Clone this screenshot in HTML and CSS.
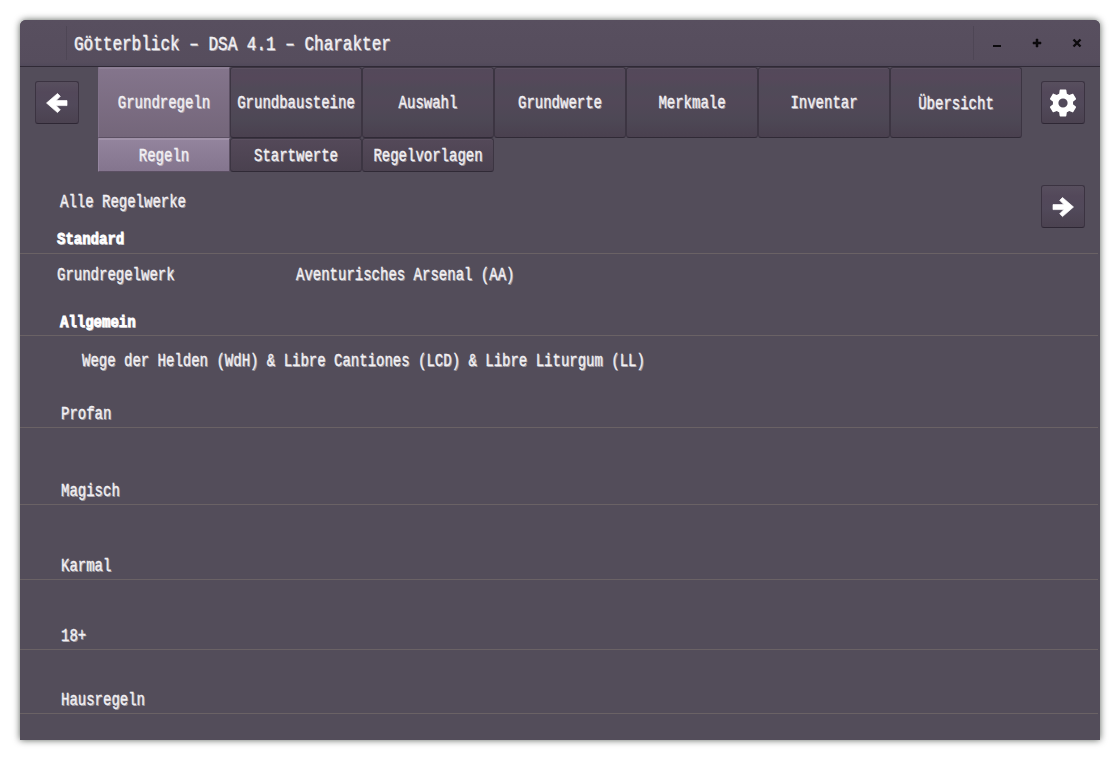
FILE: index.html
```html
<!DOCTYPE html>
<html lang="de">
<head>
<meta charset="utf-8">
<title>Götterblick – DSA 4.1 – Charakter</title>
<link rel="stylesheet" href="styles.css">
</head>
<body>
<div class="window">
  <header class="titlebar">
    <div class="app-slot"></div>
    <h1 class="title"><span class="t">Götterblick – DSA 4.1 – Charakter</span></h1>
    <div class="controls">
      <svg class="ctl" viewBox="0 0 40 46"><path d="M16 25h8v2h-8z"/></svg>
      <svg class="ctl" viewBox="0 0 40 46"><path d="M16 22h3v-3h2v3h3v2h-3v3h-2v-3h-3z" class="plus"/></svg>
      <svg class="ctl" viewBox="0 0 40 46"><path d="M16.500 19.500l7 7M23.500 19.500l-7 7" class="cross"/></svg>
    </div>
  </header>
  <div class="toolbar">
    <button class="icon-btn back"><svg viewBox="0 0 24 24"><path class="arrow" d="M12.5 2.5l2.8 2.8-4.2 4.3H22v5H11.100l4.200 4.200-2.800 2.800L1.500 12z"/></svg></button>
    <nav class="nav">
      <div class="tabs main">
        <div class="tab active"><span class="t">Grundregeln</span></div>
        <div class="tab"><span class="t">Grundbausteine</span></div>
        <div class="tab"><span class="t">Auswahl</span></div>
        <div class="tab"><span class="t">Grundwerte</span></div>
        <div class="tab"><span class="t">Merkmale</span></div>
        <div class="tab"><span class="t">Inventar</span></div>
        <div class="tab low"><span class="t">Übersicht</span></div>
      </div>
      <div class="tabs sub">
        <div class="tab active"><span class="t">Regeln</span></div>
        <div class="tab"><span class="t">Startwerte</span></div>
        <div class="tab"><span class="t">Regelvorlagen</span></div>
      </div>
    </nav>
    <div class="side">
      <button class="icon-btn"><svg class="gear" viewBox="2 2 20 20"><path d="M19.14 12.94c.04-.3.06-.61.06-.94 0-.32-.02-.64-.07-.94l2.030-1.580c.18-.14.23-.41.12-.61l-1.920-3.320c-.12-.22-.37-.29-.59-.22l-2.390.96c-.5-.38-1.030-.7-1.620-.94l-.36-2.540c-.04-.24-.24-.41-.48-.41h-3.840c-.24 0-.43.17-.47.41l-.36 2.540c-.59.24-1.130.57-1.620.94l-2.390-.96c-.22-.08-.47 0-.59.22L2.740 8.870c-.12.21-.08.47.12.61l2.030 1.580c-.05.3-.09.63-.09.94s.02.64.07.94l-2.030 1.580c-.18.14-.23.41-.12.61l1.920 3.320c.12.22.37.29.59.22l2.390-.96c.5.38 1.030.7 1.620.94l.36 2.540c.05.24.24.41.48.41h3.840c.24 0 .44-.17.47-.41l.36-2.540c.59-.24 1.130-.56 1.620-.94l2.390.96c.22.08.47 0 .59-.22l1.920-3.320c.12-.22.07-.47-.12-.61l-2.010-1.580zM12 15.300a3.300 3.300 0 1 1 0-6.600 3.300 3.300 0 0 1 0 6.600z"/></svg></button>
      <button class="icon-btn"><svg viewBox="0 0 24 24"><path class="arrow" d="M11.500 2.500L8.700 5.300l4.200 4.300H2v5h10.900l-4.200 4.200 2.800 2.800L22.500 12z"/></svg></button>
    </div>
  </div>
  <main class="content">
    <div class="all"><span class="t">Alle Regelwerke</span></div>
    <h2 class="rule standard"><span class="t">Standard</span></h2>
    <div class="books">
      <span class="book t">Grundregelwerk</span><span class="t">Aventurisches Arsenal (AA)</span>
    </div>
    <h2 class="rule allgemein"><span class="t">Allgemein</span></h2>
    <div class="wide"><span class="t">Wege der Helden (WdH) &amp; Libre Cantiones (LCD) &amp; Libre Liturgum (LL)</span></div>
    <h3 class="rule profan"><span class="t">Profan</span></h3>
    <h3 class="rule magisch"><span class="t">Magisch</span></h3>
    <h3 class="rule karmal"><span class="t">Karmal</span></h3>
    <h3 class="rule adult"><span class="t">18+</span></h3>
    <h3 class="rule haus"><span class="t">Hausregeln</span></h3>
  </main>
</div>
</body>
</html>
```
FILE: styles.css
```css
* { box-sizing: border-box; }
body {
  margin: 0;
  padding: 20px;
  background: #fff;
  color: #f3f1f4;
  font: 14px/20px "Liberation Mono", monospace;
  overflow: hidden;
}
h1, h2, h3 { margin: 0; font-size: inherit; font-weight: normal; }
.window {
  width: 1080px;
  height: 720px;
  background: #534d5a;
  border-radius: 6px 6px 0 0;
  box-shadow: 0 0 7px rgba(0, 10, 0, .65);
  overflow: hidden;
}
/* tall, narrow lettering with a hard light shadow */
.t {
  display: inline-block;
  white-space: pre;
  transform: translateY(.6px) scaleY(1.27);
  transform-origin: 50% 70%;
  -webkit-text-stroke: .25px currentColor;
  text-shadow: 1px 1px 0 rgba(255, 255, 255, .42);
}
.titlebar {
  display: flex;
  align-items: center;
  height: 47px;
  background: linear-gradient(#584f5f, #564d5d 42px, #50495a);
  border-bottom: 1px solid #302a36;
}
.app-slot { width: 47px; height: 34px; border-right: 1px solid #4e4655; }
.title { flex: 1; padding: 3px 0 0 7px; font-size: 16px; }
.title .t { transform: scaleY(1.24); transform-origin: center; }
.controls { display: flex; align-items: center; height: 34px; width: 127px; border-left: 1px solid #4e4655; padding-left: 3px; }
.ctl { width: 40px; height: 46px; fill: #0d0b0e; }
.plus { stroke: #0d0b0e; stroke-width: .5; }
.cross { stroke: #0d0b0e; stroke-width: 2.4; }
.toolbar { display: flex; height: 118px; }
.icon-btn {
  display: flex;
  flex-shrink: 0;
  align-items: center;
  justify-content: center;
  width: 44px;
  height: 43px;
  padding: 0;
  border: 1px solid #3b3341;
  border-bottom-color: #2e2734;
  border-radius: 3px;
  background: linear-gradient(#584f5e, #53485a 25%, #51495a 55%, #4b4250);
}
.icon-btn svg { width: 24px; height: 24px; fill: #fff; }
.icon-btn .gear { width: 28px; height: 28px; }
.arrow { stroke: #fff; stroke-width: .7; }
.back { margin: 14px 19px 0 15px; }
.nav { flex: 1; }
.tabs { display: flex; }
.tab {
  display: flex;
  align-items: center;
  justify-content: center;
  width: 132px;
  border: 1px solid #3c3542;
  border-bottom-color: #302a36;
  border-radius: 3px;
  box-shadow: inset 0 1px #5b5060;
  background: linear-gradient(#53495a, #55485a 15%, #504a58 30%, #524858 50%, #4d4855 75%, #4a404f);
}
.main .tab { height: 71px; }
.sub .tab { height: 34px; padding-top: 1px; background: linear-gradient(#544959, #4a414f); }
.main .low { padding-top: 2px; }
.main .active { background: linear-gradient(#84758c, #74667a); border-color: #8c7e94 #5c5063 #5c5063 #81728a; border-radius: 1px; box-shadow: inset 0 1px #8e8096; }
.sub .active { background: linear-gradient(#93849d, #84758e); border-color: #a091a8 #5c5063 #5c5063 #9586a0; border-radius: 1px; box-shadow: inset 0 1px #a193aa; }
.side { display: flex; flex-direction: column; gap: 61px; width: 59px; padding-top: 14px; }
.rule { display: flex; align-items: flex-end; border-bottom: 1px solid #6a6265; padding-left: 41px; width: 1078px; }
.all { height: 42px; padding: 7px 0 0 40px; }
h2 { font-weight: bold; color: #fff; }
h2 .t { transform: translateY(.6px) scaleY(1.22); -webkit-text-stroke-width: .7px; }
.standard { height: 27px; padding: 0 0 4px 37px; }
.books { display: flex; align-items: flex-start; height: 55px; padding: 11px 0 0 37px; }
.book { width: 239px; }
.allgemein { height: 27px; padding: 0 0 3px 40px; }
.wide { height: 52px; padding: 15px 0 0 62px; }
.profan { height: 40px; padding-bottom: 3px; }
.magisch { height: 77px; padding-bottom: 3px; }
.karmal { height: 75px; padding-bottom: 3px; }
.adult { height: 70px; padding-bottom: 3px; }
.haus { height: 64px; padding-bottom: 3px; }
```
